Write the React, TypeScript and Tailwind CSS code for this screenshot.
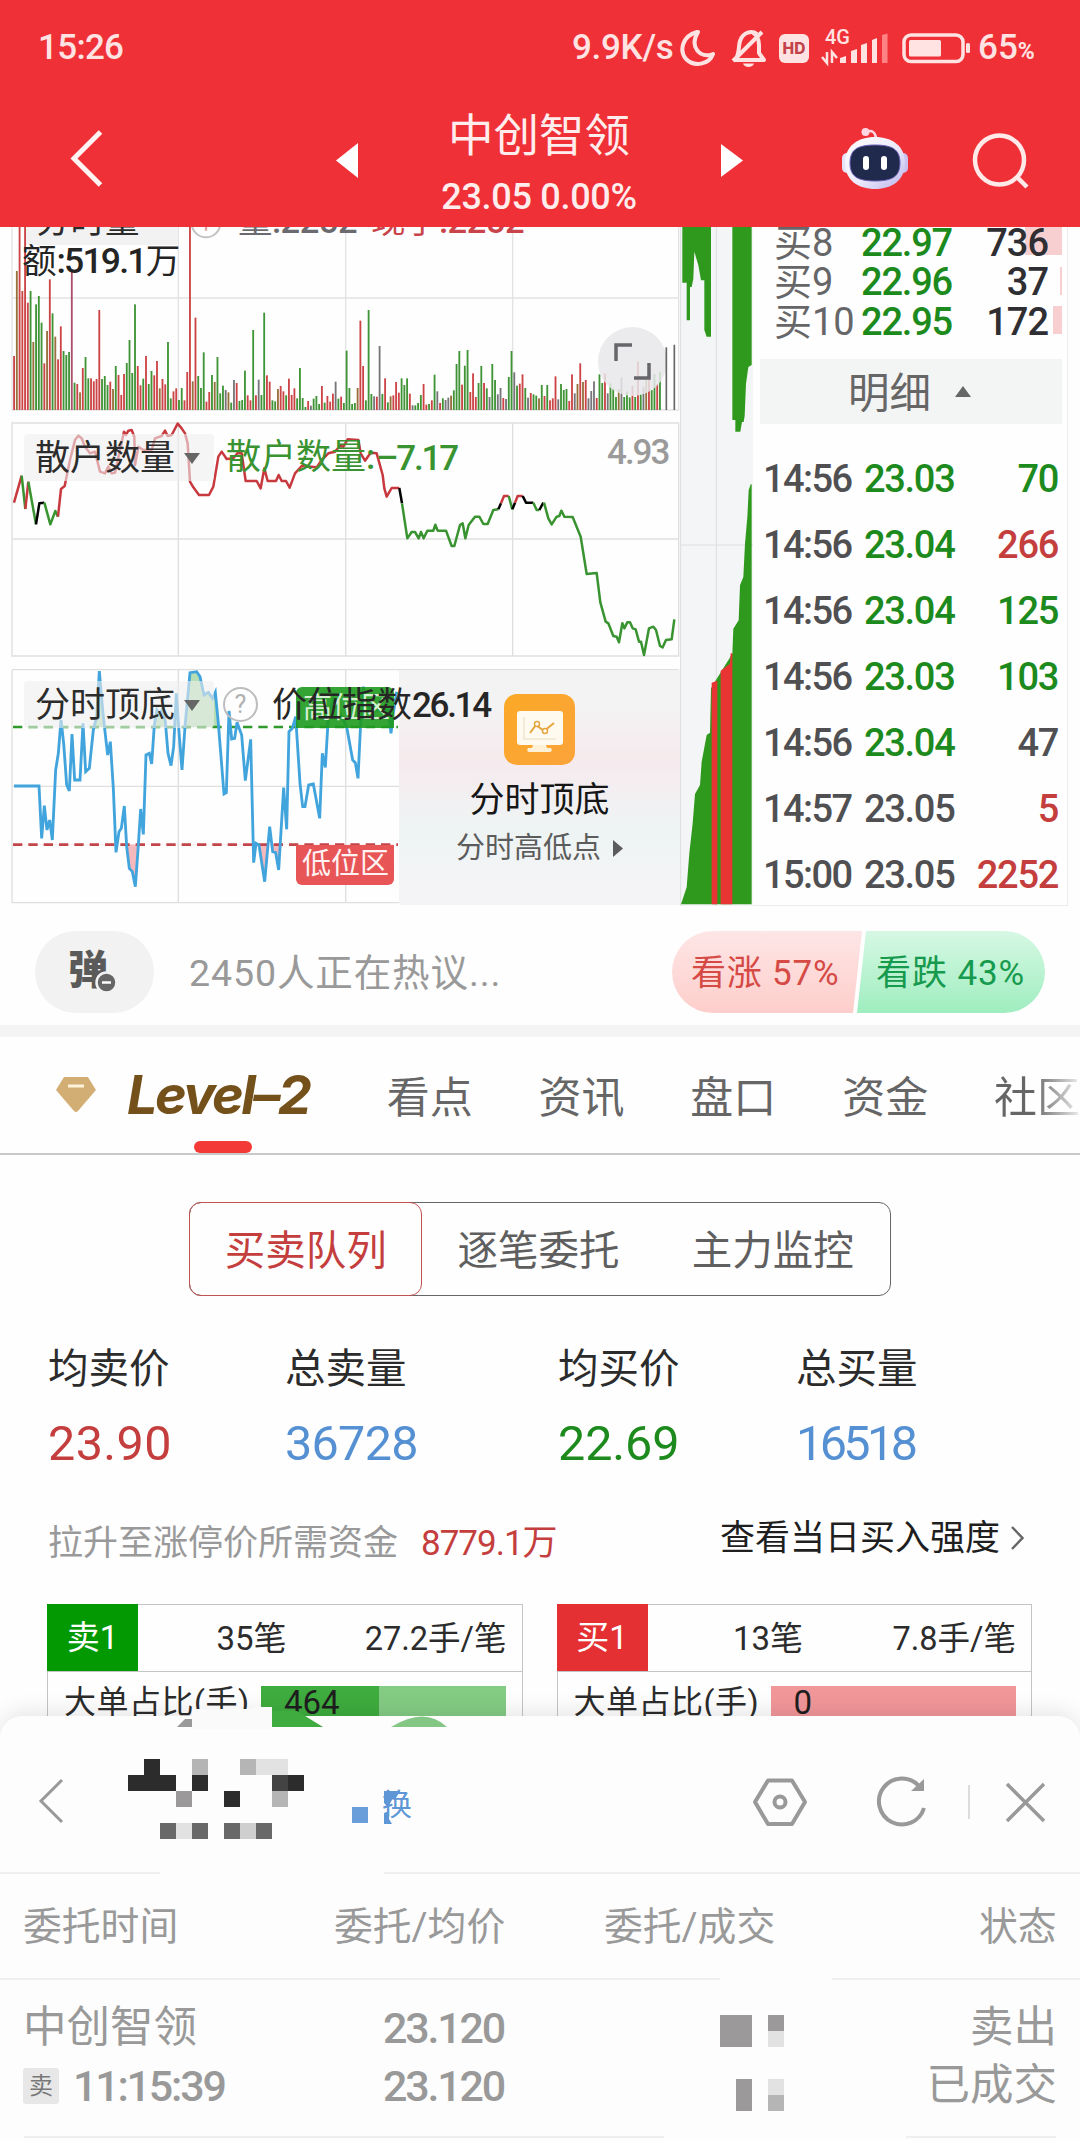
import type { ReactNode } from "react";

/* Volume bars: colour letter + top edge, one bar every 8.27 units, base line at 570. */
const VOLUME =
  "r408 b153 r0 r213 r0 r248 g213 b366 g253 g228 g308 r430 b333 r178 g280 b350 r418 r319 g393 g405 g396 p150 g488 r492 b517 r444 g411 g475 r475 r484 r477 r270 g477 g468 g495 r485 b507 g438 r465 r525 r462 g429 g360 g459 g253 r438 r496 g476 r408 g492 g453 r466 r423 b505 r477 r493 g366 g535 r514 r505 g540 g504 r541 r456 r0 b484 r293 g468 g504 g397 r545 r516 g465 b486 g411 g520 g497 k510 b517 g548 k480 r489 g543 g540 g452 r526 r541 g330 r526 k479 g525 g278 r466 r485 g541 g544 b507 r498 r514 g526 r476 r525 r505 g535 g444 g534 g561 r543 k557 g536 g528 g552 r498 g548 r528 r545 r521 k485 g536 r530 g549 g392 g504 g552 g549 b504 r302 r438 g541 g270 g522 k529 r530 k378 g522 r475 g547 b529 r526 r486 r518 g475 g495 g475 r521 k556 g556 g549 g525 r492 r554 g552 r541 g464 k514 r549 g535 k540 k533 b527 g511 g432 g393 r494 g437 g390 r516 r460 r531 g489 g438 r489 g505 k531 g432 g480 k523 k504 r534 k537 g471 g393 k457 g497 r491 r463 g504 k533 r519 g523 g527 b535 g495 r528 g495 r541 r535 r469 k538 g492 g510 g507 r543 r463 k520 b492 r430 b486 r480 k535 k513 k484 r534 g463 g489 r460 k520 g490 g505 g531 b508 k472 g531 g515 g532 r498 g531 r425 g523 k500 b470 r450 g510 g462 r492 g455"
    .split(" ")
    .map((s) => ({ c: s[0], y: Number(s.slice(1)) }));

const BAR: Record<string, string> = {
  r: "#cc4446",
  g: "#3f9436",
  b: "#98703c",
  k: "#77757a",
  p: "#a8506c",
};

const RED = "#c8393f";
const GREEN = "#389330";
const RETAIL: [string, string][] = [
  [RED, "42,278 65,197"],
  [GREEN, "65,197 76,297"],
  [RED, "76,297 85,215"],
  [GREEN, "85,215 108,343"],
  ["#000", "108,343 118,280 133,278"],
  [GREEN, "133,278 151,343 166,303 174,320"],
  [
    RED,
    "174,320 183,237 194,228 210,150 225,90 235,77 245,85 255,110 270,130 285,125 300,185 315,190 325,170 335,190 345,188 360,120 372,65 378,75 385,62 395,60 403,80 405,165 415,110 430,120 455,120 465,85 485,78 495,62 503,78 515,75 533,41 545,55 555,70 563,100 570,215 580,232 597,255 627,255 640,230 655,140 665,125 680,147 700,145 712,130 725,130 737,213 770,213 782,235 793,175 803,213 828,213 836,195 845,213 858,213 869,233 885,190 905,168 950,172 965,150 985,130 1005,125 1020,108 1030,110 1043,88 1075,90 1082,130 1095,152 1112,128 1130,130 1148,195 1153,235 1160,260 1175,234 1198,234",
  ],
  ["#000", "1198,234 1206,280"],
  [
    GREEN,
    "1206,280 1222,385 1235,366 1245,366 1256,385 1263,366 1271,385 1282,362 1300,362 1306,344 1313,362 1338,362 1355,408 1363,408 1380,345 1388,340 1396,385 1406,345 1425,320 1438,320 1450,342 1463,342 1480,300 1495,298",
  ],
  ["#000", "1495,298 1503,280"],
  [RED, "1503,280 1512,258 1526,258"],
  [GREEN, "1526,258 1537,298"],
  ["#000", "1537,298 1545,278"],
  [RED, "1545,278 1553,258 1568,258"],
  ["#000", "1568,258 1578,278 1600,278"],
  [GREEN, "1600,278 1610,300 1618,300"],
  ["#000", "1618,300 1630,278"],
  [
    GREEN,
    "1632,278 1645,325 1655,343 1670,320 1678,318 1684,302 1693,320 1718,321 1742,380 1760,492 1790,489 1801,577 1817,635 1825,640 1840,678 1850,680 1857,697 1867,640 1873,655 1882,637 1890,637 1898,655 1907,658 1917,695 1923,695 1932,735 1947,655 1960,650 1968,660 1980,708 1988,712 1998,690 2015,688 2023,628",
  ],
];

const SWING =
  "42,378 117,378 125,535 133,437 141,510 149,480 157,540 167,330 175,280 183,180 191,250 200,375 208,393 216,222 224,360 240,360 249,190 257,335 268,325 280,210 290,170 298,33 308,150 315,215 323,285 331,245 340,385 348,577 357,515 364,505 373,438 380,560 388,625 397,635 406,680 414,570 422,447 430,523 438,285 448,280 455,312 463,195 471,150 480,165 488,145 496,185 504,280 513,317 521,260 529,100 538,230 546,330 555,200 570,38 590,35 600,50 612,105 625,97 638,115 646,97 655,190 672,402 679,398 687,153 695,237 704,235 711,187 725,225 736,362 752,238 761,608 768,550 777,555 794,665 809,500 818,575 827,578 836,630 851,383 860,508 867,215 877,205 887,170 900,370 908,440 915,440 926,375 940,372 959,475 967,280 976,322 985,170 1000,120 1040,200 1058,300 1066,308 1074,355 1083,170 1090,80 1100,130 1110,150 1165,150 1173,220 1180,160 1190,95";

const TRADES = [
  ["14:56", "23.03", "70", "g", "g"],
  ["14:56", "23.04", "266", "g", "r"],
  ["14:56", "23.04", "125", "g", "g"],
  ["14:56", "23.03", "103", "g", "g"],
  ["14:56", "23.04", "47", "g", "k"],
  ["14:57", "23.05", "5", "k", "r"],
  ["15:00", "23.05", "2252", "k", "r"],
];
const TONE: Record<string, string> = {
  g: "text-[#1c8a1c]",
  r: "text-[#c53e3e]",
  k: "text-[#505053]",
};

function StatusBar() {
  return (
    <div className="flex h-[96px] items-center pl-[38px] text-[35px] leading-[40px] text-[#ffe3e3]">
      <span className="w-[534px] font-medium tracking-[-0.7px]">15:26</span>
      <span className="w-[108px] font-medium tracking-[-0.3px] whitespace-nowrap">9.9K/s</span>
      <svg className="h-[40px] w-[298px] shrink-0" viewBox="680 27 298 40" fill="none">
        <path d="M697 31C682 35 679 50 686 58C694 66 709 64 713 53C700 58 689 46 698 31Z" stroke="#ffe3e3" strokeWidth="4" strokeLinejoin="round" />
        <path d="M735 59H764L759 52V44C759 38 757 34 753 32M735 59C740 53 738 46 740 40C743 31 752 29 757 33M733 60L762 31" stroke="#ffe3e3" strokeWidth="4" strokeLinejoin="round" />
        <path d="M743 62.500H754C753 67 744 67 743 62.500Z" fill="#ffe3e3" />
        <rect x="779" y="33" width="30" height="29" rx="6" fill="#ffe3e3" />
        <text x="794" y="52.500" textAnchor="middle" fontSize="15.500" fontWeight="800" fontFamily="Inter" fill="#c2434a">HD</text>
        <text x="825" y="43" fontSize="20" fontWeight="500" fontFamily="Roboto" fill="#ffe3e3">4G</text>
        <path d="M827 51V62L822 56M832 62V51L837 57" stroke="#ffe3e3" strokeWidth="2.500" />
        <path d="M840 62V57L846 55V62ZM851 62V50L857 48V62ZM861 62V44L867 42V62ZM872 62V39L877 37V62Z" fill="#ffe3e3" />
        <path d="M882 62V34L887.500 32.500V62Z" fill="#ff8384" />
        <rect x="904" y="34" width="59" height="26.500" rx="7" stroke="#ffe3e3" strokeWidth="3.500" />
        <rect x="909" y="39" width="32" height="16.500" rx="1.500" fill="#ffe3e3" />
        <rect x="966" y="42" width="4" height="10" rx="1.500" fill="#ffe3e3" />
      </svg>
      <span className="font-medium">65</span>
      <span className="mt-[8px] text-[23px] font-bold">%</span>
    </div>
  );
}

function Header() {
  return (
    <header className="h-[227px] shrink-0 bg-[#ef3037]">
      <StatusBar />
      <div className="flex h-[131px] items-start">
        <svg className="mt-[31px] ml-[66px] h-[64px] w-[40px]" viewBox="0 0 40 64" fill="none">
          <path d="M34.500 5L8 31.500L34.500 58" stroke="#fff3f3" strokeWidth="5" />
        </svg>
        <svg className="mt-[47px] ml-[230px] h-[35px] w-[22px]" viewBox="0 0 22 35">
          <path d="M22 0V35L0 17.500Z" fill="#fff" />
        </svg>
        <div className="ml-[61px] flex w-[240px] flex-col items-center text-[#ffeded]">
          <div className="mt-[13px] text-[45.500px] leading-[56px] whitespace-nowrap">中创智领</div>
          <div className="mt-[12px] text-[36px] leading-[40px] font-medium tracking-[-0.300px] whitespace-nowrap">23.05 0.00%</div>
        </div>
        <svg className="mt-[48px] ml-[62px] h-[33px] w-[22px]" viewBox="0 0 22 33">
          <path d="M0 0V33L22 16.500Z" fill="#fff" />
        </svg>
        <svg className="mt-[30px] ml-[98px] h-[66px] w-[68px]" viewBox="841 126 68 66">
          <defs>
            <linearGradient id="head" x1="0" y1="0" x2="1" y2="1">
              <stop offset="0" stopColor="#ffffff" />
              <stop offset="0.550" stopColor="#eceafc" />
              <stop offset="1" stopColor="#b9b3ea" />
            </linearGradient>
          </defs>
          <circle cx="865.500" cy="132" r="4" fill="#ffd6e2" />
          <path d="M866 132C872 129 876 133 876 139" stroke="#ffd6e2" strokeWidth="2.500" fill="none" />
          <rect x="842" y="153" width="10" height="20" rx="5" fill="#e6e2fa" />
          <rect x="898" y="153" width="10" height="20" rx="5" fill="#c9c2ef" />
          <path d="M875 137C892 137 905 146 905 163C905 180 892 189 875 189C858 189 845 180 845 163C845 146 858 137 875 137Z" fill="url(#head)" />
          <path d="M875 145C893 145 900 150 900 163C900 176 893 181 875 181C857 181 850 176 850 163C850 150 857 145 875 145Z" fill="#1f2a4c" stroke="#6d63b8" strokeWidth="1" />
          <rect x="863" y="156" width="6" height="14" rx="3" fill="#fff" />
          <rect x="881" y="156" width="6" height="14" rx="3" fill="#fff" />
        </svg>
        <svg className="mt-[34px] ml-[62px] h-[62px] w-[62px]" viewBox="971 130 62 62" fill="none" stroke="#ffe9e9" strokeWidth="4.500">
          <circle cx="999.500" cy="160" r="24.500" />
          <path d="M1017 177L1027 187" />
        </svg>
      </div>
    </header>
  );
}

function Chip({ children }: { children: ReactNode }) {
  return (
    <div className="flex h-[47px] w-[190px] items-center gap-[9px] rounded-sm bg-[#efefef]/60 pt-[2px] pl-[11px] text-[35px] leading-[40px] text-[#2c2c2c]">
      <span>{children}</span>
      <svg className="h-[11px] w-[16px]" viewBox="0 0 16 11">
        <path d="M0 0H16L8 11Z" fill="#666" />
      </svg>
    </div>
  );
}

function VolumePanel() {
  return (
    <div className="relative h-[193px] overflow-hidden text-[34.500px] leading-[40px]">
      <svg className="absolute inset-0 h-full w-full" viewBox="0 21 2040 579">
        <path d="M36 0V570H2036V0M36 234H2036M535 0V570M1037 0V570M1538 0V570" fill="none" stroke="#e3e3e6" strokeWidth="4" />
      </svg>
      <div className="absolute top-0 left-[24px] h-[18px] w-[154px] bg-[#f1f2f1]" />
      <svg className="absolute inset-0 h-full w-full" viewBox="0 21 2040 579">
        {VOLUME.map((b, i) => (
          <rect key={i} x={39.5 + i * 8.245} y={b.y} width="5.500" height={570 - b.y} fill={BAR[b.c]} />
        ))}
        <circle cx="618" cy="9" r="43" fill="none" stroke="#c4c1c1" strokeWidth="6" />
        <path d="M618 18V32" stroke="#e3a2a2" strokeWidth="7" />
      </svg>
      <div className="absolute top-[-26px] left-[36px] text-[#2c2c2c]">分时量</div>
      <div className="absolute top-[-26px] left-[238px] tracking-[-0.500px] whitespace-nowrap text-[#6a6a70]">
        量<span className="font-medium">:2252</span>
      </div>
      <div className="absolute top-[-26px] left-[371px] tracking-[-0.500px] whitespace-nowrap text-[#c8434a]">
        现手<span className="font-medium">:2252</span>
      </div>
      <div className="absolute top-[-35px] left-[556px] font-medium whitespace-nowrap text-[#e59a9a]">↑1142.00</div>
      <div className="absolute top-[14px] left-[22px] whitespace-nowrap text-[#242424]">
        额<span className="text-[35.500px] font-medium tracking-[-1.800px]">:519.1</span>万
      </div>
      <div className="absolute top-[100px] left-[598px] flex size-[69px] items-center justify-center rounded-full bg-[#e8e8ea]/85">
        <svg className="size-[37px]" viewBox="0 0 37 37" fill="none" stroke="#67676b" strokeWidth="3.500">
          <path d="M2 18V2H18M35 20V35H20" />
        </svg>
      </div>
      <svg className="absolute inset-0 h-full w-full" viewBox="0 21 2040 579">
        <path d="M1999 382V570M2023 374V570" stroke="#666" strokeWidth="5" />
      </svg>
    </div>
  );
}

function RetailPanel() {
  return (
    <div className="relative h-[240px]">
      <svg className="absolute inset-0 h-full w-full" viewBox="0 30 2040 720" fill="none">
        <path d="M36 39H2036V738H36Z M36 387H2036M535 39V738M1037 39V738M1538 39V738" stroke="#dfdfdf" strokeWidth="4" />
        {RETAIL.map(([c, p], i) => (
          <polyline key={i} points={p} stroke={c} strokeWidth="7.500" strokeLinejoin="round" />
        ))}
      </svg>
      <div className="absolute top-[14px] left-[24px]">
        <Chip>散户数量</Chip>
      </div>
      <div className="absolute top-[18px] left-[226px] text-[35px] leading-[40px] whitespace-nowrap text-[#389330]">
        散户数量<span className="font-medium">:</span>
      </div>
      <div className="absolute top-[19px] left-[376px] text-[35px] leading-[40px] font-medium tracking-[-2.200px] whitespace-nowrap text-[#389330]">
        –7.17
      </div>
      <div className="absolute top-[13px] left-[607px] text-[35px] leading-[40px] font-medium tracking-[-2px] text-[#9a9a9a]">
        4.93
      </div>
    </div>
  );
}

function SwingPanel() {
  return (
    <div className="relative h-[245px]">
      <svg className="absolute inset-0 h-full w-full" viewBox="0 0 2040 735" fill="none">
        <defs>
          <clipPath id="above">
            <rect x="0" y="0" width="900" height="201" />
          </clipPath>
          <clipPath id="below">
            <rect x="0" y="553" width="2040" height="182" />
          </clipPath>
        </defs>
        <path d="M36 29H2036M36 29V728H2036M36 379H1200M535 29V728M1037 29V728" stroke="#dfdfdf" strokeWidth="4" />
        <polygon points={`42,203 ${SWING} 1190,203`} fill="#b5deb4" clipPath="url(#above)" />
        <polygon points={`42,553 ${SWING} 1190,553`} fill="#f5b9bd" clipPath="url(#below)" />
        <path d="M39 201H1194" stroke="#2f9a2b" strokeWidth="7" strokeDasharray="28 18" />
        <path d="M39 554H1194" stroke="#c24549" strokeWidth="8" strokeDasharray="28 18" />
        <polyline points={SWING} stroke="#41a4dc" strokeWidth="8.500" />
      </svg>
      <div className="absolute top-[27px] left-[296px] h-[41px] w-[98px] rounded-t-md bg-[#1e9a1e]/90 pl-[7px] text-[29px] leading-[42px] text-[#d5f0d2]">
        高位区
      </div>
      <div className="absolute top-[185px] left-[296px] h-[40px] w-[98px] rounded-b-md bg-[#e75556] pl-[6px] text-[29px] leading-[39px] text-[#fff2f2]">
        低位区
      </div>
      <div className="absolute top-[10px] left-[399px] flex h-[235px] w-[281px] flex-col items-center bg-[linear-gradient(#f3f3f4_15%,#f6eaed_38%,#f2f0f2_55%,#eef4f3_70%,#f4f4f6_90%)]">
        <svg className="mt-[24px] size-[71px] shrink-0" viewBox="0 0 71 71">
          <defs>
            <linearGradient id="tile" x1="0" y1="0" x2="1" y2="1">
              <stop offset="0" stopColor="#fba927" />
              <stop offset="1" stopColor="#fba33a" />
            </linearGradient>
          </defs>
          <rect width="71" height="71" rx="13" fill="url(#tile)" />
          <rect x="13" y="17" width="46" height="34" rx="3" fill="#fffaf0" />
          <path d="M29 51H42L43 54H47Q49 57 46 58H25Q22 57 24 54H28Z" fill="#fff1d8" />
          <path d="M20 23V45H52" stroke="#f1e5cf" strokeWidth="1.500" fill="none" />
          <path d="M26 39L32 31L40 37L50 29" stroke="#e6a63f" strokeWidth="2" fill="none" />
          <circle cx="33" cy="30" r="2.500" fill="#fff" stroke="#e6a63f" strokeWidth="1.500" />
          <circle cx="41" cy="37" r="2.500" fill="#fff" stroke="#e6a63f" strokeWidth="1.500" />
        </svg>
        <div className="mt-[16px] text-[35px] leading-[40px] text-[#161616]">分时顶底</div>
        <div className="mt-[9px] flex items-center gap-[12px] text-[29px] leading-[36px] text-[#5c5c5c]">
          分时高低点
          <svg className="h-[17px] w-[10px]" viewBox="0 0 10 17">
            <path d="M0 0L10 8.500L0 17Z" fill="#5c5c5c" />
          </svg>
        </div>
      </div>
      <div className="absolute top-[21px] left-[24px]">
        <Chip>分时顶底</Chip>
      </div>
      <div className="absolute top-[27px] left-[223px] flex size-[35px] items-center justify-center rounded-full border-[2.500px] border-[#bdbdbd] text-[25px] leading-[30px] text-[#b0b0b0]">
        ?
      </div>
      <div className="absolute top-[26px] left-[272px] text-[35px] leading-[40px] whitespace-nowrap text-[#262626]">
        价位指数<span className="font-medium tracking-[-2.300px]">26.14</span>
      </div>
    </div>
  );
}

function DepthStrip() {
  return (
    <svg className="h-[679px] w-[73px] shrink-0 bg-[#f4f5f6]" viewBox="0 0 219 2037">
      <path d="M2 0V2037M109 0V2037M0 954H219" stroke="#dcdee0" strokeWidth="3" />
      <path d="M7 0H93V329H80L73 309V160H63L55 115L43 74L40 155L35 180H30V280H20V167H7Z" fill="#2f991d" />
      <path d="M157 0H215V414L205 420L198 470L194 567L191 585H186L181 614H166V579H157Z" fill="#2f991d" />
      <path d="M212 772L206 790L202 870L195 950L190 1050L180 1075L176 1180L160 1205L157 1280L108 1359L93 1384L90 1517L80 1524L65 1604L60 1674L45 1701L38 1789L28 1879L20 1981L3 2032H215V772Z" fill="#2f991d" />
      <path d="M95 2032V1367L112 1361V2032ZM122 2032V1331L150 1310L152 1279H157V2032Z" fill="#e93434" />
    </svg>
  );
}

function QuotesColumn() {
  const bids = [
    ["买8", "22.97", "736", "w-[37px]"],
    ["买9", "22.96", "37", "w-[2px]"],
    ["买10", "22.95", "172", "w-[9px]"],
  ];
  return (
    <div className="flex h-[679px] w-[315px] flex-col overflow-hidden border-r border-b border-[#ececec] pl-[7px] text-[38px]">
      <div className="-mt-[4px] flex flex-col">
        {bids.map(([label, price, qty, bar]) => (
          <div key={label} className="relative flex h-[39.500px] items-center leading-[40px]">
            <div className={`absolute top-[4px] left-[302px] h-[28px] -translate-x-full bg-[#f7cfd1] ${bar}`} />
            <span className="relative w-[101px] pl-[14px] whitespace-nowrap text-[#666669]">{label}</span>
            <span className="relative w-[92px] font-medium tracking-[-1.200px] text-[#1c8a1c]">{price}</span>
            <span className="relative w-[95px] text-right font-medium tracking-[-1px] text-[#2f2f33]">{qty}</span>
          </div>
        ))}
      </div>
      <div className="mt-[17.500px] flex h-[65px] w-[302px] shrink-0 items-center bg-[#f3f4f4] pt-[4px] pl-[88px] text-[41.500px] leading-[50px] text-[#666]">
        明细
        <svg className="mt-[-5px] ml-[24px] h-[11px] w-[16px]" viewBox="0 0 16 11">
          <path d="M8 0L16 11H0Z" fill="#666" />
        </svg>
      </div>
      <div className="h-[22px] shrink-0 overflow-hidden leading-[44px] font-medium">
        <div className="-mt-[36px] flex tracking-[-1.200px]">
          <span className="w-[104px] pl-[3px] text-[#505053]">14:56</span>
          <span className="w-[93px] text-[#1c8a1c]">23.03</span>
          <span className="w-[101px] text-right text-[#1c8a1c]">80</span>
        </div>
      </div>
      <div className="flex flex-col">
        {TRADES.map(([time, price, qty, pc, qc], i) => (
          <div key={i} className="flex h-[66px] shrink-0 items-center leading-[44px] tracking-[-1.300px]">
            <span className="w-[104px] pl-[3px] font-medium tracking-[-1.600px] text-[#505053]">{time}</span>
            <span className={`w-[93px] font-medium ${TONE[pc]}`}>{price}</span>
            <span className={`w-[101px] text-right font-medium ${TONE[qc]}`}>{qty}</span>
          </div>
        ))}
      </div>
    </div>
  );
}

function DiscussionRow() {
  return (
    <div className="flex h-[119px] items-start pt-[25px] pl-[35px]">
      <div className="relative flex h-[82px] w-[119px] items-center justify-center rounded-[41px] bg-[#f2f2f2] pr-[13px] pb-[2px] text-[40px] leading-[44px] font-black text-[#5a5a5a]">
        弹
        <svg className="absolute top-[40px] left-[60px] size-[23px]" viewBox="0 0 23 23">
          <circle cx="11.500" cy="11.500" r="10" fill="#666" stroke="#f2f2f2" strokeWidth="2.500" />
          <path d="M7 11.500H16" stroke="#fff" strokeWidth="2.500" />
        </svg>
      </div>
      <div className="ml-[35px] w-[483px] text-[37.500px] leading-[84px] tracking-[0.900px] whitespace-nowrap text-[#999]">2450人正在热议...</div>
      <div className="flex h-[82px] text-[35px] leading-[85px] whitespace-nowrap">
        <div className="h-full w-[190px] rounded-l-[41px] bg-gradient-to-b from-[#fde6e6] to-[#fdcecb] pl-[19px] tracking-[0.800px] text-[#d54a45] [clip-path:polygon(0_0,100%_0,181px_100%,0_100%)]">
          看涨 57%
        </div>
        <div className="-ml-[5px] h-full w-[188px] rounded-r-[41px] bg-gradient-to-b from-[#d6f8e4] to-[#9eedbf] pl-[19px] tracking-[0.900px] text-[#169a4e] [clip-path:polygon(9px_0,100%_0,100%_100%,0_100%)]">
          看跌 43%
        </div>
      </div>
    </div>
  );
}

function Tabs() {
  return (
    <div className="relative flex h-[118px] items-center overflow-hidden border-b-2 border-[#c9c9c9] text-[43px] leading-[50px] whitespace-nowrap text-[#666]">
      <svg className="mt-[-1px] ml-[56px] h-[35px] w-[40px]" viewBox="0 0 40 35">
        <path d="M8 0H32L40 13L22 34Q20 36 18 34L0 13Z" fill="#d3ae74" />
        <path d="M12 9H28" stroke="#fff3da" strokeWidth="3" />
      </svg>
      <span className="ml-[31px] w-[260px] font-[Inter] text-[54px] font-bold tracking-[-2.600px] text-[#74501a] italic">Level–2</span>
      <span className="mt-[5px] w-[152px]">看点</span>
      <span className="mt-[5px] w-[152px]">资讯</span>
      <span className="mt-[5px] w-[152px]">盘口</span>
      <span className="mt-[5px] w-[152px]">资金</span>
      <span className="mt-[5px] bg-gradient-to-r from-[#666] from-45% to-[#eee] bg-clip-text text-transparent">社区</span>
      <div className="absolute bottom-0 left-[194px] h-[12px] w-[58px] rounded-full bg-[#f33a36]" />
    </div>
  );
}

function Level2() {
  const stats = [
    ["均卖价", "23.90", "w-[237px]", "tracking-[0.400px] text-[#c53e3e]"],
    ["总卖量", "36728", "w-[273px]", "tracking-[-0.700px] text-[#5590d2]"],
    ["均买价", "22.69", "w-[238px]", "tracking-[-0.100px] text-[#1c8a1c]"],
    ["总买量", "16518", "w-[200px]", "tracking-[-3.600px] text-[#5590d2]"],
  ];
  const queues = [
    ["卖1", "35笔", "27.2手/笔", "464", "bg-[#039903]", "bg-[#84cb84]", "w-[235px]"],
    ["买1", "13笔", "7.8手/笔", "0", "bg-[#e53033]", "bg-[#f19699]", "w-[228px]"],
  ];
  return (
    <section className="flex h-[561px] shrink-0 flex-col overflow-hidden">
      <div className="mt-[47px] ml-[189px] flex h-[94px] w-[702px] shrink-0 rounded-[12px] border-[1.500px] border-[#666] text-[40.500px] leading-[97px] text-[#5f5f5f]">
        <div className="-m-[1px] box-content w-[232px] rounded-[12px] border-[1.500px] border-[#c25252] text-center text-[#c53e3e]">买卖队列</div>
        <div className="w-[235px] text-center">逐笔委托</div>
        <div className="w-[235px] text-center">主力监控</div>
      </div>
      <div className="mt-[48px] ml-[48px] flex">
        {stats.map(([k, v, w, c]) => (
          <div key={k} className={w}>
            <div className="text-[40.500px] leading-[50px] text-[#2c2c2c]">{k}</div>
            <div className={`mt-[25px] text-[48.500px] leading-[50px] ${c}`}>{v}</div>
          </div>
        ))}
      </div>
      <div className="mt-[50px] flex h-[44px] items-center pl-[48px] text-[35px] leading-[44px] whitespace-nowrap">
        <span className="w-[373px] pt-[6px] text-[#999]">拉升至涨停价所需资金</span>
        <span className="w-[299px] pt-[6px] tracking-[-1px] text-[#c53e3e]">8779.1万</span>
        <span className="mt-[-5px] text-[#1f1f1f]">查看当日买入强度</span>
        <svg className="mt-[-7px] ml-[10px] h-[26px] w-[15px]" viewBox="0 0 15 26" fill="none">
          <path d="M2 2L12.500 13L2 24" stroke="#666" strokeWidth="2.500" />
        </svg>
      </div>
      <div className="mt-[41px] ml-[47px] flex gap-[34px] text-[32px] leading-[68px] text-[#2c2c2c]">
        {queues.map(([side, count, avg, big, strong, soft, avgWidth], i) => (
          <div key={side} className="h-[140px] w-[475.500px] border-[1.500px] border-[#c4c4c4]">
            <div className="flex h-[67px] border-b-[1.500px] border-[#c4c4c4]">
              <div className={`-mt-px -ml-px h-[67px] w-[91px] text-center text-[33px] text-white ${strong}`}>{side}</div>
              <div className="flex-1 text-right text-[33px] whitespace-nowrap">{count}</div>
              <div className={`pr-[15px] text-right text-[32.500px] ${avgWidth}`}>{avg}</div>
            </div>
            <div className="mt-[14px] flex h-[60px] leading-[33px]">
              <span className="w-[195px] pl-[16px] text-[32px] tracking-[0.500px] whitespace-nowrap">大单占比(手)</span>
              <div className={`relative ml-[18px] h-full w-[245px] pl-[23px] text-[33px] text-[#1e1e1e] ${soft}`}>
                {i === 0 && <div className="absolute inset-y-0 left-0 w-[118px] bg-[#3eac3e]" />}
                <span className="relative">{big}</span>
              </div>
            </div>
          </div>
        ))}
      </div>
    </section>
  );
}

/* Pixelated block for masked account data; one letter per cell, "." is empty. */
const CELL: Record<string, string> = {
  k: "bg-[#2c2c2c]",
  d: "bg-[#434343]",
  m: "bg-[#686868]",
  a: "bg-[#9b9999]",
  b: "bg-[#b5b5b5]",
  c: "bg-[#cfcfcf]",
  e: "bg-[#e2e2e2]",
  u: "bg-[#6a9edb]",
  ".": "",
};
function Mosaic({ rows }: { rows: string[] }) {
  return (
    <div className="flex flex-col">
      {rows.map((r, i) => (
        <div key={i} className="flex">
          {r.split("").map((c, j) => (
            <div key={j} className={`size-[16px] ${CELL[c]}`} />
          ))}
        </div>
      ))}
    </div>
  );
}

function OrdersSheet() {
  return (
    <section className="relative h-[424px] shrink-0 rounded-t-[22px] bg-[#fdfdfd] text-[#999] shadow-[0_-4px_22px_rgba(0,0,0,0.1)]">
      <svg className="absolute top-[-10px] left-[170px] h-[24px] w-[290px]" viewBox="170 1706 290 24">
        <path d="M177 1727L185 1719H194V1727Z" fill="#999" />
        <path d="M270 1711H297L323 1727H270Z" fill="#3eac3e" />
        <path d="M391 1727Q425 1706 447 1727Z" fill="#84c684" />
        <path d="M192 1709H252V1707H272V1729H192Z" fill="#fafafa" />
      </svg>
      <div className="flex h-[156px] items-start">
        <svg className="mt-[62px] ml-[37px] h-[46px] w-[28px]" viewBox="0 0 28 46" fill="none">
          <path d="M25 2L4 23L25 44" stroke="#999" strokeWidth="3" />
        </svg>
        <div className="mt-[43px] ml-[63px] w-[224px]">
          <Mosaic rows={[".k..b..bee.", "kkk.k....dk", "...a..k..b.", "...........", "..mem.mcm.."]} />
        </div>
        <div className="mt-[91px]">
          <Mosaic rows={["u"]} />
        </div>
        <div className="relative mt-[70px] ml-[14px] w-[369px] text-[30px] leading-[38px] text-[#5f96d6]">
          换
          <svg className="absolute top-[5px] left-[2px] h-[33px] w-[16px]" viewBox="0 0 16 33">
            <path d="M0 0H16V1L8 9L4 16L0 12Z" fill="#5f96d6" />
            <path d="M0 22L5 20V28L8 33H0Z" fill="#5f96d6" />
          </svg>
        </div>
        <svg className="mt-[60px] h-[52px] w-[300px]" viewBox="751 1776 300 52" fill="none" stroke="#999" strokeWidth="4">
          <path d="M768 1780.500H792L805 1802L792 1824H768L755 1802Z" strokeLinejoin="round" />
          <circle cx="780" cy="1802" r="5.500" />
          <path d="M924 1808A23 23 0 1 1 919 1786" />
          <path d="M924 1779V1791H911Z" fill="#999" stroke="none" />
          <path d="M969 1785V1819" stroke="#dcdcdc" strokeWidth="2" />
          <path d="M1007 1784L1044 1821M1044 1784L1007 1821" strokeWidth="3.500" />
        </svg>
      </div>
      <div className="flex justify-between">
        <div className="h-[2px] w-[160px] bg-[#efefef]" />
        <div className="h-[2px] w-[696px] bg-[#efefef]" />
      </div>
      <div className="flex h-[104px] items-center pt-[2px] pl-[23px] text-[38.800px] leading-[50px] whitespace-nowrap">
        <span className="w-[311px]">委托时间</span>
        <span className="w-[270px]">委托/均价</span>
        <span className="w-[375px]">委托/成交</span>
        <span>状态</span>
      </div>
      <div className="flex justify-between">
        <div className="h-[2px] w-[720px] bg-[#efefef]" />
        <div className="h-[2px] w-[248px] bg-[#efefef]" />
      </div>
      <div className="flex h-[156px] pt-[19px] pl-[23px] text-[43.500px] leading-[58px] whitespace-nowrap">
        <div className="flex w-[360px] flex-col">
          <span>中创智领</span>
          <div className="flex items-center">
            <span className="flex h-[36px] w-[36px] items-center justify-center rounded-[3px] bg-[#e7e7e7] text-[24px] text-[#777]">卖</span>
            <span className="ml-[14px] text-[43px] font-medium tracking-[-2.200px]">11:15:39</span>
          </div>
        </div>
        <div className="flex w-[337px] flex-col text-[43px] font-medium tracking-[-2.200px]">
          <span>23.120</span>
          <span>23.120</span>
        </div>
        <div className="mt-[16px] w-[72px]">
          <Mosaic rows={["aa.a", "aa.e", "....", "....", ".a.e", ".a.b"]} />
        </div>
        <div className="flex w-[265px] flex-col text-right">
          <span>卖出</span>
          <span>已成交</span>
        </div>
      </div>
      <div className="flex justify-between px-[24px]">
        <div className="h-[2px] w-[640px] bg-[#efefef]" />
        <div className="h-[2px] w-[150px] bg-[#efefef]" />
      </div>
    </section>
  );
}

export default function App() {
  return (
    <div className="flex h-[2140px] w-[1080px] flex-col overflow-hidden bg-[#fefefe] font-[Roboto,'Noto_Sans_CJK_SC',sans-serif]">
      <Header />
      <div className="flex h-[679px] shrink-0">
        <div className="flex w-[680px] flex-col">
          <VolumePanel />
          <RetailPanel />
          <SwingPanel />
        </div>
        <DepthStrip />
        <QuotesColumn />
      </div>
      <DiscussionRow />
      <div className="h-[12px] shrink-0 bg-[#f4f4f4]" />
      <Tabs />
      <Level2 />
      <OrdersSheet />
    </div>
  );
}
